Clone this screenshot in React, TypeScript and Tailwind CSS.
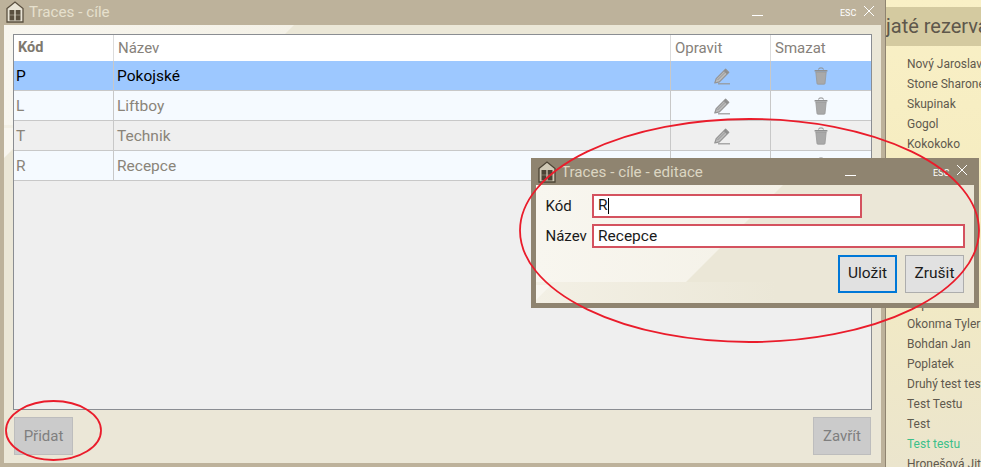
import React from "react";

const font = { fontFamily: "Roboto, sans-serif" };

function HouseIcon({ dark = "#5a5040", fill = "#e9e4d6" }: { dark?: string; fill?: string }) {
  return (
    <svg width="18" height="22" viewBox="0 0 18 22" className="shrink-0">
      <path d="M1 7.5 L9 1 L17 7.5 V21 H1 Z" fill={fill} stroke={dark} strokeWidth="1.3" />
      <rect x="3.5" y="9" width="11" height="10.5" fill={dark} />
      <path d="M9 9 V19.5" stroke={fill} strokeWidth="1.3" />
      <path d="M3.5 14 H14.5" stroke={fill} strokeWidth="0.8" opacity="0.5" />
    </svg>
  );
}

function Pencil() {
  return (
    <svg width="18" height="18" viewBox="0 0 18 18">
      <path d="M3.2 11.6 L12.6 2.2 L15.8 5.4 L6.4 14.8 L1.8 16 Z" fill="#bcbcbc" stroke="#949494" strokeWidth="1.2" strokeLinejoin="round" />
      <path d="M11.6 3.2 L14.8 6.4" stroke="#8f8f8f" strokeWidth="2.4" />
      <path d="M4.5 13 L13 4.5" stroke="#969696" strokeWidth="1" />
      <path d="M5 16.8 H17" stroke="#969696" strokeWidth="1.2" />
    </svg>
  );
}

function Trash() {
  return (
    <svg width="14" height="18" viewBox="0 0 14 18">
      <path d="M4.6 2.6 Q4.6 1 6 1 H8 Q9.4 1 9.4 2.6" fill="none" stroke="#8f8f8f" strokeWidth="1" />
      <path d="M0.6 3 H13.4 V4.6 H0.6 Z" fill="#8f8f8f" />
      <path d="M1.8 5 H12.2 L11 16.5 Q10.9 17.2 10.2 17.2 H3.8 Q3.1 17.2 3 16.5 Z" fill="#a9a9a9" stroke="#989898" strokeWidth="0.8" />
    </svg>
  );
}

function PanelBackdrop({ top, fold, tri, id }: { top: number; fold: number; tri: number; id: string }) {
  const foldX = top - fold;
  return (
    <svg className="absolute inset-0 w-full h-full">
      <defs>
        <linearGradient id={id} x1="0" y1="0" x2={top} y2="0" gradientUnits="userSpaceOnUse">
          <stop offset="0" stopColor="#f8f6ef" />
          <stop offset="1" stopColor="#f4f1e7" />
        </linearGradient>
        <linearGradient id={`${id}b`} x1="0" y1="0" x2={foldX * 1.6} y2="0" gradientUnits="userSpaceOnUse">
          <stop offset="0" stopColor="#f3f0e5" />
          <stop offset="1" stopColor="#ebe7d7" />
        </linearGradient>
      </defs>
      <rect width="100%" height="100%" fill="#ebe7d7" />
      <path d={`M0 ${fold} H${foldX * 1.6} V${fold + 21} H0 Z`} fill={`url(#${id}b)`} />
      <path d={`M0 0 H${top} L${foldX} ${fold} H0 Z`} fill={`url(#${id})`} />
      <path d={`M0 ${fold + 3} H${tri} L0 ${fold + 3 + tri} Z`} fill="#f8f6ef" />
    </svg>
  );
}

const rows = [
  { code: "P", name: "Pokojské", cls: "bg-[#9dc8ff] text-black" },
  { code: "L", name: "Liftboy", cls: "bg-[#f5faff] text-[#8a8479]" },
  { code: "T", name: "Technik", cls: "bg-[#efefef] text-[#8a8479]" },
  { code: "R", name: "Recepce", cls: "bg-[#f5faff] text-[#8a8479]" },
];

const topNames = ["Nový Jaroslav", "Stone Sharone", "Skupinak", "Gogol", "Kokokoko"];
const bottomNames = ["Kopřiva Jan", "Okonma Tyler", "Bohdan Jan", "Poplatek", "Druhý test test", "Test Testu", "Test"];

function Sidebar() {
  return (
    <aside className="ml-auto w-[96px] h-[467px] overflow-hidden border-l border-[#8f8470] bg-[linear-gradient(180deg,#f9f0c6_0%,#f5ecc0_45%,#ebe5cd_100%)]">
      <div className="mt-[7px] h-[39px] bg-[#d4caa0] text-[20px] leading-[38px] text-[#5e574b] whitespace-nowrap overflow-hidden">
        jaté rezerva
      </div>
      <ul className="pl-[21px] pt-[8px] text-[12px] leading-[20px] text-[#5f594e] whitespace-nowrap">
        {topNames.map((n) => (
          <li key={n} className="h-[20px]">{n}</li>
        ))}
      </ul>
      <ul className="pl-[21px] mt-[140px] text-[12px] leading-[20px] text-[#5f594e] whitespace-nowrap">
        {bottomNames.map((n) => (
          <li key={n} className="h-[20px]">{n}</li>
        ))}
        <li className="h-[20px] text-[#3cc08a]">Test testu</li>
        <li className="h-[20px]">Hronešová Jitka</li>
      </ul>
    </aside>
  );
}

function MainWindow() {
  return (
    <section className="absolute left-0 top-0 w-[885px] h-[467px] bg-[#bdb29b] flex flex-col px-[4px] pb-[4px]">
      <header className="h-[25px] shrink-0 flex items-start pl-[2px] relative">
        <div className="mt-[1px]"><HouseIcon /></div>
        <span className="ml-[5px] mt-[3px] text-[15.2px] leading-[18px] text-[#e6e0cd]">Traces - cíle</span>
        <div className="ml-auto relative w-[130px] h-full">
          <div className="absolute left-[1px] top-[15px] w-[11px] h-px bg-white" />
          <span className="absolute left-[89px] top-[9px] text-[9px] leading-[9px] text-white">ESC</span>
          <svg className="absolute left-[112px] top-[5px]" width="12" height="12" viewBox="0 0 12 12">
            <path d="M1 1 L11 11 M11 1 L1 11" stroke="white" strokeWidth="1" />
          </svg>
        </div>
      </header>
      <div className="relative flex-1 flex flex-col">
        <PanelBackdrop top={290} fold={100} tri={30} id="mainBg" />
        <div className="relative flex flex-col flex-1 pt-[9px] pl-[9px] pr-[9px]">
          <div className="w-[859px] h-[376px] border border-[#8a8d92] bg-[#efefef] flex flex-col">
            <div className="h-[26px] shrink-0 bg-white flex text-[#86817a] text-[15px] leading-[26px]">
              <div className="w-[100px] pl-[4px] font-bold text-[14.5px] text-[#7e786e] border-r border-[#dcdcdc]">Kód</div>
              <div className="w-[557px] pl-[4px] border-r border-[#dcdcdc]">Název</div>
              <div className="w-[100px] pl-[4px] border-r border-[#dcdcdc]">Opravit</div>
              <div className="flex-1 pl-[4px]">Smazat</div>
            </div>
            {rows.map((r) => (
              <div key={r.code} className={`flex shrink-0 h-[30px] text-[15.5px] leading-[31px] border-b border-[#c8c8c8] ${r.cls}`}>
                <div className="w-[100px] pl-[2px] border-r border-[#c8c8c8]">{r.code}</div>
                <div className="w-[557px] pl-[3px] border-r border-[#c8c8c8]">{r.name}</div>
                <div className="w-[100px] border-r border-[#c8c8c8] flex items-center justify-center pl-[3px]"><Pencil /></div>
                <div className="flex-1 flex items-center justify-center"><Trash /></div>
              </div>
            ))}
          </div>
          <div className="flex justify-between pl-[1px] pr-[1px] mt-[7px]">
            <button className="w-[59px] h-[38px] bg-[#cbcbcb] border border-[#bdbdbd] text-[#7f7f7f] text-[15px]">Přidat</button>
            <button className="w-[58px] h-[38px] bg-[#cbcbcb] border border-[#bdbdbd] text-[#7f7f7f] text-[15px]">Zavřít</button>
          </div>
        </div>
      </div>
    </section>
  );
}

function EditDialog() {
  return (
    <section className="absolute left-[531px] top-[158px] w-[448px] h-[150px] bg-[#8f8470] flex flex-col px-[5px] pb-[5px]">
      <header className="h-[27px] shrink-0 flex items-start pl-[2px] relative">
        <div className="mt-[3px]"><HouseIcon dark="#4c4435" fill="#cfc8b5" /></div>
        <span className="ml-[5px] mt-[5px] text-[15.2px] leading-[18px] text-[#dcd6c2]">Traces - cíle - editace</span>
        <div className="absolute left-[309px] top-[17px] w-[11px] h-px bg-white" />
        <span className="absolute left-[397px] top-[11px] text-[9px] leading-[9px] text-white">ESC</span>
        <svg className="absolute left-[420px] top-[6px]" width="12" height="12" viewBox="0 0 12 12">
          <path d="M1 1 L11 11 M11 1 L1 11" stroke="white" strokeWidth="1" />
        </svg>
      </header>
      <div className="relative flex-1">
        <PanelBackdrop top={247} fold={97} tri={15} id="dlgBg" />
        <div className="relative pt-[9px] pl-[9.5px] text-[15.5px] text-[#1a1a1a]">
          <div className="flex items-center h-[24px]">
            <label className="w-[46.5px] text-[15px] pt-[1px]">Kód</label>
            <div className="w-[270px] h-[24px] border-2 border-[#d4525f] bg-white pl-[4px] flex items-center">
              R<span className="w-px h-[16px] bg-black" />
            </div>
          </div>
          <div className="flex items-center h-[24px] mt-[6px]">
            <label className="w-[46.5px] text-[15px]">Název</label>
            <div className="w-[373px] h-[24px] border-2 border-[#d4525f] bg-white pl-[4px] leading-[20px]">Recepce</div>
          </div>
          <div className="flex justify-end gap-[8px] mt-[7px] pr-[10px]">
            <button className="w-[59px] h-[38px] bg-[#e1e1e1] border-2 border-[#0078d7]">Uložit</button>
            <button className="w-[59px] h-[38px] bg-[#e1e1e1] border border-[#adadad]">Zrušit</button>
          </div>
        </div>
      </div>
    </section>
  );
}

export default function App() {
  return (
    <div className="relative w-[981px] h-[467px] overflow-hidden flex bg-[#efe9cf]" style={font}>
      <Sidebar />
      <MainWindow />
      <EditDialog />
      <svg className="absolute inset-0 pointer-events-none" width="981" height="467" viewBox="0 0 981 467">
        <ellipse cx="749.5" cy="230.5" rx="229.5" ry="111.5" fill="none" stroke="#ea1c2b" strokeWidth="1.8" />
        <ellipse cx="53.5" cy="430.5" rx="47.5" ry="29.5" fill="none" stroke="#ea1c2b" strokeWidth="1.8" />
      </svg>
    </div>
  );
}
